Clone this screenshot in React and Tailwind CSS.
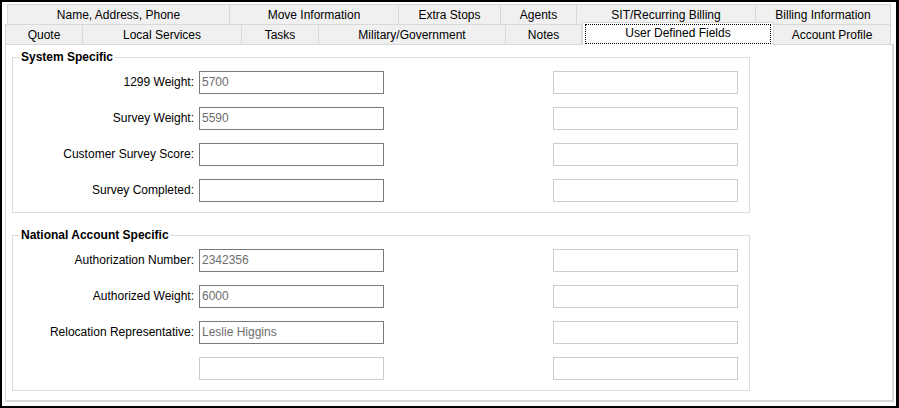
import React from 'react';

const topTabs = [
    { label: 'Name, Address, Phone', w: 'w-[223px]' },
    { label: 'Move Information', w: 'w-[169px]' },
    { label: 'Extra Stops', w: 'w-[102px]' },
    { label: 'Agents', w: 'w-[76px]' },
    { label: 'SIT/Recurring Billing', w: 'w-[179px]' },
    { label: 'Billing Information', w: 'w-[135px]' },
];

const bottomTabs = [
    { label: 'Quote', w: 'w-[78px]' },
    { label: 'Local Services', w: 'w-[159px]' },
    { label: 'Tasks', w: 'w-[77px]' },
    { label: 'Military/Government', w: 'w-[187px]' },
    { label: 'Notes', w: 'w-[76px]' },
    { label: 'User Defined Fields', w: 'w-[192px]', active: true },
    { label: 'Account Profile', w: 'w-[117px]' },
];

const systemRows = [
    { label: '1299 Weight:', value: '5700' },
    { label: 'Survey Weight:', value: '5590' },
    { label: 'Customer Survey Score:', value: '' },
    { label: 'Survey Completed:', value: '' },
];

const nationalRows = [
    { label: 'Authorization Number:', value: '2342356' },
    { label: 'Authorized Weight:', value: '6000' },
    { label: 'Relocation Representative:', value: 'Leslie Higgins' },
    { label: '', value: '', disabled: true },
];

function Field({ value, disabled }) {
    return (
        <input
            type="text"
            readOnly
            value={value}
            className={
                'w-[185px] h-[23px] border bg-white pl-[2px] pb-[2px] text-[12px] text-[#6d6d6d] focus:outline-none ' +
                (disabled ? 'border-[#cccccc]' : 'border-[#7a7a7a]')
            }
        />
    );
}

function Group({ title, rows, className }) {
    return (
        <div className={'relative w-[738px] h-[156px] border border-[#dcdcdc] ' + className}>
            <span className="absolute left-[7px] top-[-8px] px-px bg-white font-bold text-[12px] leading-[14px]">{title}</span>
            <div className="flex flex-col gap-[13px] pt-[12px]">
                {rows.map((row, i) => (
                    <div key={i} className="flex items-center h-[23px]">
                        <div className="w-[181px] text-right text-[12px] leading-[14px]">{row.label}</div>
                        <div className="ml-[5px]">
                            <Field value={row.value} disabled={row.disabled} />
                        </div>
                        <div className="ml-[169px]">
                            <Field value="" disabled />
                        </div>
                    </div>
                ))}
            </div>
        </div>
    );
}

export default function App() {
    return (
        <main
            className="w-[899px] h-[408px] bg-white border-t-2 border-l-2 border-b-2 border-r-[3px] border-black pt-[2px] pl-[3px] text-black"
            style={{ fontFamily: '"Liberation Sans", Arial, sans-serif' }}
        >
            {/* Tab rows */}
            <div className="flex h-[20px] ml-[2px]">
                {topTabs.map((t, i) => (
                    <div
                        key={t.label}
                        className={
                            t.w + ' h-[20px] flex items-center justify-center bg-[#f0f0f0] border-t border-r border-[#d9d9d9] text-[12px] ' +
                            (i === 0 ? 'border-l' : '')
                        }
                    >
                        {t.label}
                    </div>
                ))}
            </div>
            <div className="flex items-end h-[20px]">
                {bottomTabs.map((t, i) =>
                    t.active ? (
                        <div
                            key={t.label}
                            className={t.w + ' relative z-10 h-[23px] -mb-px bg-white border-t border-l border-r border-[#d9d9d9] pt-px px-[2px]'}
                        >
                            <div className="h-[20px] border border-dotted border-black flex items-center justify-center text-[12px] pb-[2px]">
                                {t.label}
                            </div>
                        </div>
                    ) : (
                        <div
                            key={t.label}
                            className={
                                t.w + ' h-[20px] flex items-center justify-center bg-[#f0f0f0] border-t border-r border-[#d9d9d9] text-[12px] ' +
                                (i === 0 ? 'border-l' : '')
                            }
                        >
                            {t.label}
                        </div>
                    )
                )}
            </div>

            {/* Panel */}
            <section className="w-[889px] h-[358px] bg-white border border-b-2 border-r-2 border-[#d9d9d9] pl-[6px]">
                <Group title="System Specific" rows={systemRows} className="mt-[12px]" />
                <Group title="National Account Specific" rows={nationalRows} className="mt-[22px]" />
            </section>
        </main>
    );
}
